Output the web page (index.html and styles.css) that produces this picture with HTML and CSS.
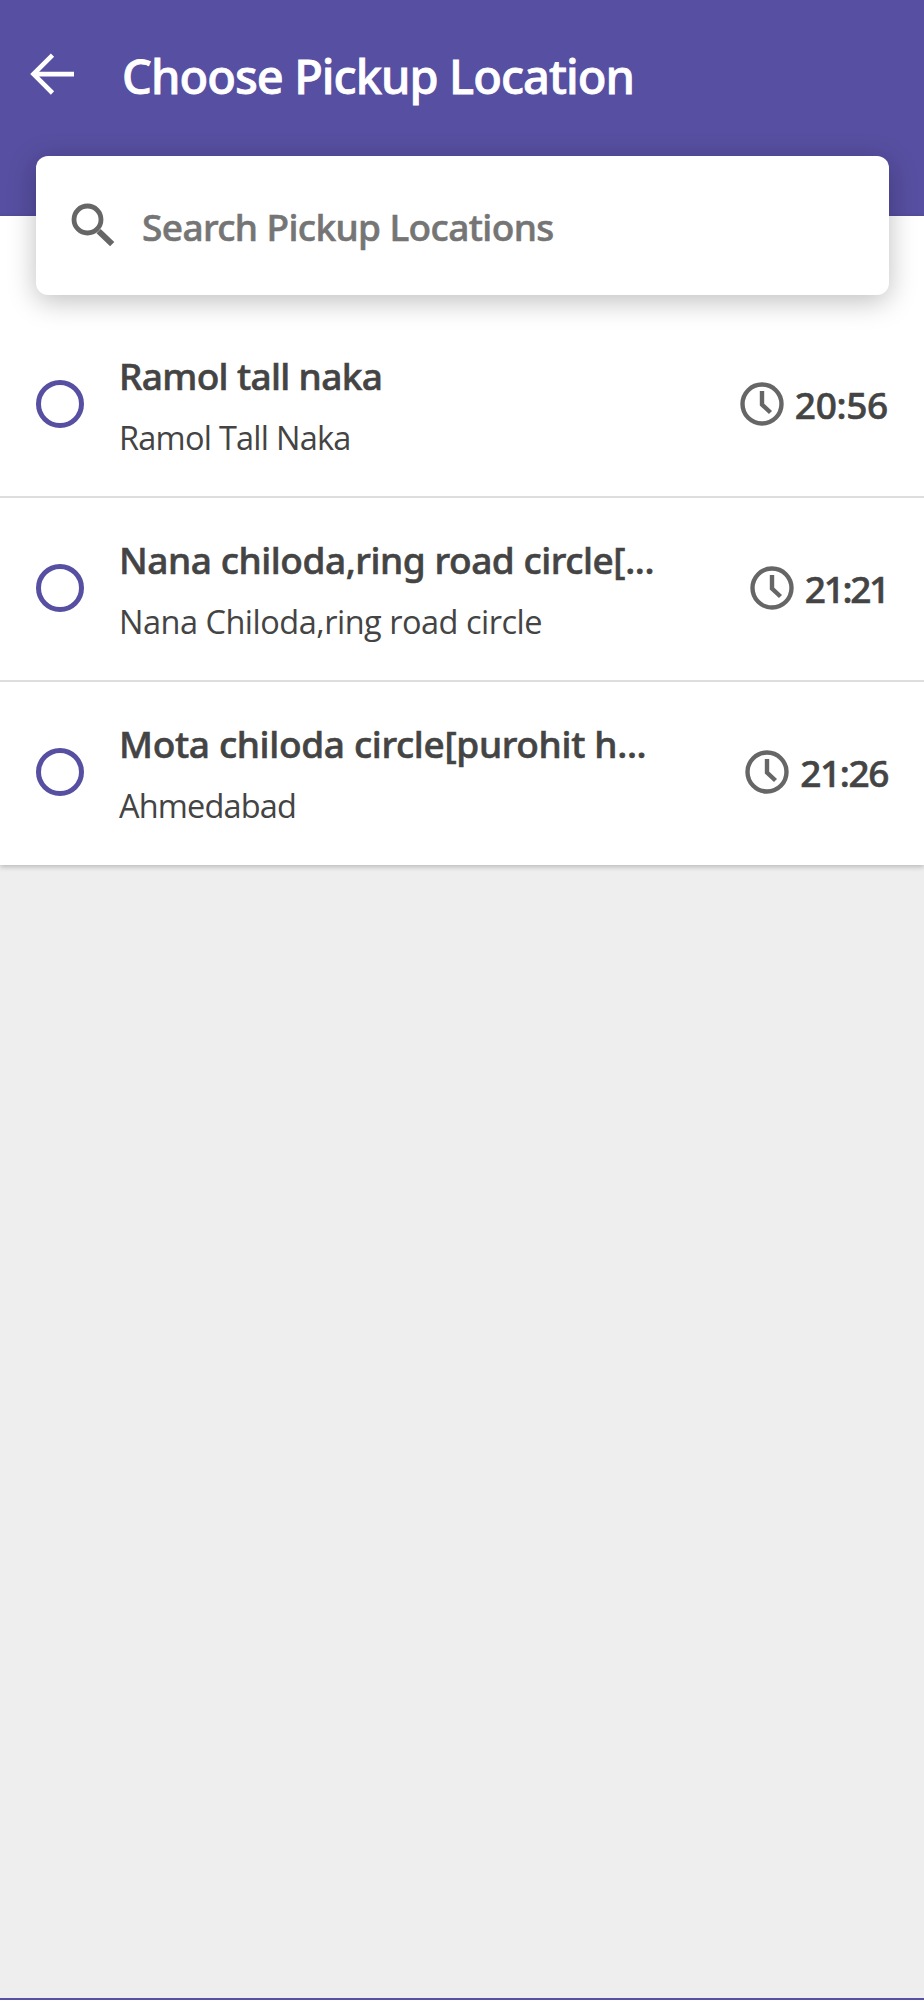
FILE: index.html
```html
<!DOCTYPE html>
<html lang="en">
<head>
<meta charset="utf-8">
<title>Choose Pickup Location</title>
<link rel="stylesheet" href="styles.css">
</head>
<body>
<header class="header">
  <svg class="back" viewBox="0 0 46 42" fill="none" stroke="#fff" stroke-width="4.6"><path d="M23.5 2.2 4.5 21.1 23.5 40M4 21.1H45"/></svg>
  <h1 class="title">Choose Pickup Location</h1>
</header>
<main class="panel">
  <div class="search">
    <svg class="lens" viewBox="0 0 44 44" fill="none" stroke="#666"><circle cx="16.5" cy="16.5" r="13.5" stroke-width="4.8"/><path d="M27.6 28.2 41.2 41.2" stroke-width="6"/></svg>
    <span class="placeholder">Search Pickup Locations</span>
  </div>
  <ul class="list">
    <li class="row">
      <span class="radio"></span>
      <div class="info"><div class="name">Ramol tall naka</div><div class="place">Ramol Tall Naka</div></div>
      <div class="when"><svg class="clock" viewBox="0 0 44 44" fill="none" stroke="#666" stroke-width="4.4"><circle cx="22" cy="22" r="19.5"/><path d="M22 9V22.5L30.5 30.5"/></svg><span class="time">20:56</span></div>
    </li>
    <li class="row">
      <span class="radio"></span>
      <div class="info"><div class="name">Nana chiloda,ring road circle[...</div><div class="place">Nana Chiloda,ring road circle</div></div>
      <div class="when"><svg class="clock" viewBox="0 0 44 44" fill="none" stroke="#666" stroke-width="4.4"><circle cx="22" cy="22" r="19.5"/><path d="M22 9V22.5L30.5 30.5"/></svg><span class="time">21:21</span></div>
    </li>
    <li class="row">
      <span class="radio"></span>
      <div class="info"><div class="name">Mota chiloda circle[purohit h...</div><div class="place">Ahmedabad</div></div>
      <div class="when"><svg class="clock" viewBox="0 0 44 44" fill="none" stroke="#666" stroke-width="4.4"><circle cx="22" cy="22" r="19.5"/><path d="M22 9V22.5L30.5 30.5"/></svg><span class="time">21:26</span></div>
    </li>
  </ul>
</main>
<footer class="edge"></footer>
</body>
</html>
```
FILE: styles.css
```css
* { box-sizing: border-box; }
body { margin: 0; min-height: 2000px; display: flex; flex-direction: column; background: #eee; color: #444; font-family: "Noto Sans", "Open Sans", sans-serif; }
.header { height: 216px; display: flex; align-items: flex-start; padding: 53px 29px 0; background: #574fa1; }
.back { width: 46px; height: 42px; flex: none; }
.title { margin: -7px 0 0 47px; font-size: 47px; line-height: 60px; font-weight: 500; letter-spacing: -.95px; -webkit-text-stroke: .8px; color: #fff; white-space: nowrap; }
.panel { height: 649px; background: #fff; box-shadow: 0 2px 5px rgba(0,0,0,.22); }
.search { height: 139px; margin: -60px 35px 19px 36px; padding-left: 35px; display: flex; align-items: center; background: #fff; border-radius: 12px; box-shadow: 0 6px 28px rgba(0,0,0,.26); position: relative; }
.lens { width: 44px; height: 44px; margin-top: -2px; }
.placeholder { margin: 2px 0 0 27px; font-size: 37px; font-weight: 500; letter-spacing: -.6px; -webkit-text-stroke: .6px; color: #757575; white-space: nowrap; }
.list { list-style: none; margin: 0; padding: 0; }
.row { height: 184px; padding: 0 36px; display: flex; align-items: flex-start; border-bottom: 2px solid #dedede; }
.row:last-child { border-color: transparent; }
.radio { width: 48px; height: 48px; margin-top: 66px; border: 5px solid #574fa1; border-radius: 50%; flex: none; }
.info { margin: 37px 0 0 35px; flex: 1; white-space: nowrap; }
.name { font-size: 37px; font-weight: 500; line-height: 50px; letter-spacing: -.65px; -webkit-text-stroke: .6px; }
.place { margin-top: 13px; font-family: "Open Sans", sans-serif; font-size: 32.5px; line-height: 48px; letter-spacing: -.75px; }
.when { display: flex; align-items: flex-start; margin-top: 66px; }
.clock { width: 44px; height: 44px; margin-top: 2px; }
.time { margin-left: 11px; font-size: 37px; line-height: 50px; font-weight: 500; letter-spacing: -.3px; -webkit-text-stroke: .6px; }
.row:nth-child(2) .name { letter-spacing: -.44px; }
.row:nth-child(2) .place { letter-spacing: -.5px; }
.row:nth-child(2) .time { letter-spacing: -2.3px; }
.row:nth-child(3) .name { letter-spacing: -.33px; }
.row:nth-child(3) .place { letter-spacing: -.85px; }
.row:nth-child(3) .time { letter-spacing: -1.4px; }
.edge { height: 2px; margin-top: auto; background: #574fa1; }
```
